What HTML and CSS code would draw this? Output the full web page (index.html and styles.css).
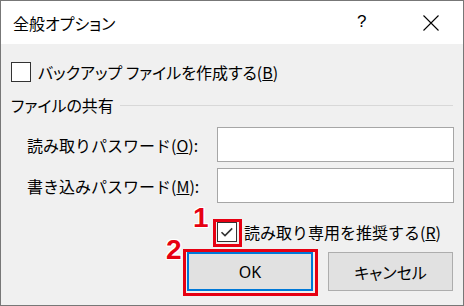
FILE: index.html
```html
<!DOCTYPE html>
<html lang="ja">
<head>
<meta charset="utf-8">
<title>全般オプション</title>
<link rel="stylesheet" href="styles.css">
</head>
<body>
<div class="win">
  <div class="titlebar">
    <span class="title">全般オプション</span>
    <span class="help">?</span>
    <span class="close"><svg width="16" height="16" viewBox="0 0 16 16"><path d="M0.5 0.5L15.5 15.5M15.5 0.5L0.5 15.5" stroke="#000" stroke-width="1.1" fill="none"/></svg></span>
  </div>
  <div class="content">
    <div class="chk-row first">
      <span class="chk"></span>
      <span class="txt">バックアップ ファイルを作成する(<u>B</u>)</span>
    </div>
    <div class="group">
      <span class="txt">ファイルの共有</span>
      <span class="line"></span>
    </div>
    <div class="field">
      <span class="lbl">読み取りパスワード(<u>O</u>):</span>
      <span class="box"></span>
    </div>
    <div class="field second">
      <span class="lbl">書き込みパスワード(<u>M</u>):</span>
      <span class="box"></span>
    </div>
    <div class="chk-row ro">
      <span class="chk"><svg width="18" height="18" viewBox="0 0 18 18"><path d="M3.5 9.2L7 12.6L14.2 5.4" stroke="#333" stroke-width="1.6" fill="none"/></svg></span>
      <span class="txt">読み取り専用を推奨する(<u>R</u>)</span>
    </div>
    <div class="buttons">
      <span class="btn ok">OK</span>
      <span class="btn cancel">キャンセル</span>
    </div>
  </div>
  <span class="mark mark1"></span>
  <span class="mark mark2"></span>
  <span class="num num1">1</span>
  <span class="num num2">2</span>
</div>
</body>
</html>
```
FILE: styles.css
```css
html, body {
  margin: 0;
  padding: 0;
  background: #f0f0f0;
}
.win {
  position: relative;
  width: 464px;
  height: 306px;
  box-sizing: border-box;
  border: 1px solid #777;
  background: #f0f0f0;
  font-family: "Noto Sans CJK JP", "Noto Sans", sans-serif;
  font-feature-settings: "palt";
  font-size: 16px;
  color: #000;
  overflow: hidden;
}
.titlebar {
  height: 43px;
  background: #fff;
  display: flex;
  align-items: center;
  padding-left: 12px;
}
.title {
  font-size: 16px;
  flex: 1;
}
.help {
  font-family: "Liberation Sans", sans-serif;
  font-size: 17px;
  width: 66px;
  margin-top: -2px;
}
.close {
  width: 40px;
  display: flex;
  align-items: center;
  height: 16px;
}
.close svg { display: block; }
.content {
  padding: 0 9px 0 10px;
}
.chk-row {
  display: flex;
  align-items: center;
  height: 20px;
}
.chk-row.first {
  margin-top: 18px;
}
.chk {
  width: 20px;
  height: 20px;
  box-sizing: border-box;
  border: 1px solid #333;
  background: #fff;
  display: flex;
  align-items: center;
  justify-content: center;
  flex: none;
}
.chk-row .txt {
  margin-left: 7px;
  white-space: nowrap;
}
.group {
  display: flex;
  align-items: center;
  height: 18px;
  margin-top: 14px;
}
.group .txt {
  white-space: nowrap;
}
.group .line {
  flex: 1;
  height: 1px;
  background: #d8d8d8;
  margin-left: 6px;
  margin-right: 1px;
}
.field {
  display: flex;
  align-items: center;
  margin-top: 13px;
  padding-left: 16px;
}
.field.second {
  margin-top: 6px;
}
.lbl {
  width: 190px;
  white-space: nowrap;
  font-feature-settings: normal;
}
.box {
  flex: 1;
  height: 35px;
  box-sizing: border-box;
  border: 1px solid #a6a6a6;
  background: #fff;
}
.chk-row.ro {
  margin-top: 19px;
  margin-left: 206px;
}
.chk-row.ro .txt {
  margin-left: 7px;
  font-feature-settings: normal;
}
.buttons {
  display: flex;
  justify-content: flex-end;
  gap: 15px;
  margin-top: 10px;
  padding-right: 1px;
}
.btn {
  height: 39px;
  box-sizing: border-box;
  display: flex;
  align-items: center;
  justify-content: center;
  background: #e1e1e1;
}
.btn.ok {
  width: 126px;
  border: 2px solid #0078d7;
  font-family: "Noto Sans", sans-serif;
}
.btn.cancel {
  width: 125px;
  border: 1px solid #adadad;
}
.mark {
  position: absolute;
  box-sizing: border-box;
  border: 3px solid #e60012;
}
.mark1 {
  left: 212px;
  top: 218px;
  width: 29px;
  height: 28px;
}
.mark2 {
  left: 182px;
  top: 248px;
  width: 135px;
  height: 47px;
}
.num {
  position: absolute;
  font-family: "Liberation Sans", sans-serif;
  font-weight: bold;
  font-size: 28px;
  line-height: 28px;
  color: #e60012;
  text-shadow: 1px 1px 0 #fff, -1px -1px 0 #fff, 1px -1px 0 #fff, -1px 1px 0 #fff, 0 1px 0 #fff, 1px 0 0 #fff, 0 -1px 0 #fff, -1px 0 0 #fff;
}
.num1 {
  left: 192px;
  top: 203px;
}
.num2 {
  left: 165px;
  top: 235px;
}
```
